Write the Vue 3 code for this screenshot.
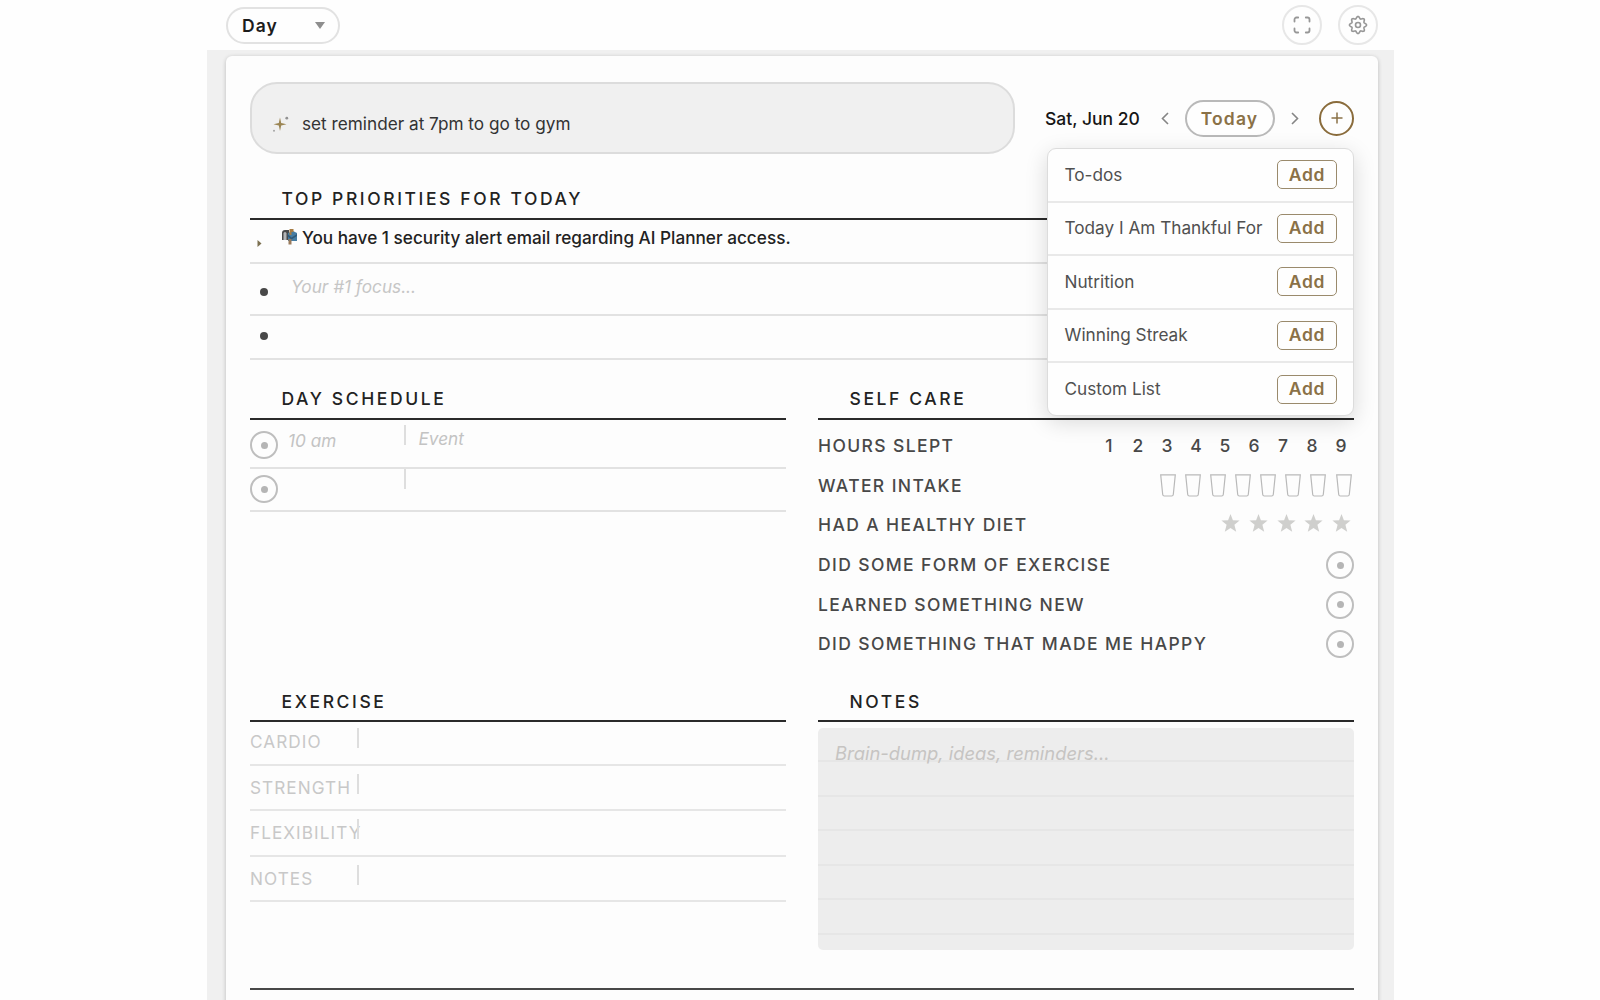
<script setup>
const priorities = [
  { alert: true, text: 'You have 1 security alert email regarding AI Planner access.', height: 44 },
  { placeholder: 'Your #1 focus...', height: 52 },
  { height: 44 },
]
const schedule = [
  { time: '10 am', event: 'Event', height: 49 },
  { time: '', event: '', height: 43 },
]
const exercise = ['CARDIO', 'STRENGTH', 'FLEXIBILITY', 'NOTES']
const habits = ['DID SOME FORM OF EXERCISE', 'LEARNED SOMETHING NEW', 'DID SOMETHING THAT MADE ME HAPPY']
const addable = ['To-dos', 'Today I Am Thankful For', 'Nutrition', 'Winning Streak', 'Custom List']

// Eight rounded teeth around the centre of a 20x20 box.
const gearPoints = Array.from({ length: 96 }, (_, i) => {
  const angle = (i / 96) * Math.PI * 2
  const radius = 7.5 + 1.05 * Math.cos(8 * angle)
  return `${(10 + radius * Math.cos(angle)).toFixed(2)},${(10 + radius * Math.sin(angle)).toFixed(2)}`
}).join(' ')
</script>

<template>
  <div class="app">
    <header class="topbar">
      <button class="view-select">
        <span>Day</span>
        <svg width="10" height="7" viewBox="0 0 10 7"><path d="M0 0h10L5 7z" fill="#8e8e8e" /></svg>
      </button>
      <div class="tools">
        <button class="round">
          <svg width="18" height="18" viewBox="0 0 18 18" fill="none" stroke="#979797" stroke-width="1.8" stroke-linecap="round" stroke-linejoin="round">
            <path d="M1.500 5.500V3.500a2 2 0 0 1 2-2h1.700M12.800 1.500h1.700a2 2 0 0 1 2 2v2M16.500 12.500v2a2 2 0 0 1-2 2h-1.700M5.200 16.500H3.500a2 2 0 0 1-2-2v-2" />
          </svg>
        </button>
        <button class="round">
          <svg width="20" height="20" viewBox="0 0 20 20" fill="none" stroke="#979797" stroke-width="1.6" stroke-linejoin="round">
            <polygon :points="gearPoints" />
            <circle cx="10" cy="10" r="2.500" />
          </svg>
        </button>
      </div>
    </header>

    <main class="sheet">
      <div class="head-row">
        <div class="prompt">
          <svg width="18" height="18" viewBox="0 0 18 18">
            <path d="M8 2.500L9.200 8L14.500 9.200L9.200 10.400L8 16L6.800 10.400L1.500 9.200L6.800 8Z" fill="#9b8553" />
            <circle cx="14.800" cy="3.200" r="1.400" fill="#929292" />
            <circle cx="2" cy="15.800" r="1" fill="#a5a5a5" />
          </svg>
          <span>set reminder at 7pm to go to gym</span>
        </div>
        <div class="date-nav">
          <span class="date">Sat, Jun 20</span>
          <svg class="prev" width="8" height="13" viewBox="0 0 8 13"><path d="M7 1L1.500 6.500L7 12" fill="none" stroke="#858585" stroke-width="1.600" /></svg>
          <button class="today">Today</button>
          <svg class="next" width="8" height="13" viewBox="0 0 8 13"><path d="M1 1L6.500 6.500L1 12" fill="none" stroke="#858585" stroke-width="1.600" /></svg>
          <button class="plus">
            <svg width="12" height="12" viewBox="0 0 12 12"><path d="M6 .5v11M.5 6h11" stroke="#8a7147" stroke-width="1.500" /></svg>
          </button>
          <div class="menu">
            <div v-for="name in addable" :key="name" class="menu-item">
              <span>{{ name }}</span>
              <button class="add">Add</button>
            </div>
          </div>
        </div>
      </div>

      <section>
        <h2 class="first">TOP PRIORITIES FOR TODAY</h2>
        <div v-for="(p, i) in priorities" :key="i" class="priority" :style="{ height: p.height + 'px' }">
          <span class="marker">
            <svg v-if="p.alert" class="arrow" width="5" height="7" viewBox="0 0 5 7"><path d="M.5 0L4.500 3.500L.5 7z" fill="#7c7050" /></svg>
            <i v-else class="bullet" />
          </span>
          <span v-if="p.alert" class="alert">
            <svg width="17" height="17" viewBox="0 0 17 17">
              <path d="M1 12V5a3 3 0 0 1 3-3h4v10z" fill="#48494a" />
              <path d="M2.500 12V5.500a1.500 1.500 0 0 1 3 0V12z" fill="#b4b6b7" />
              <path d="M7 13V5l5-2 4 2v8z" fill="#467da3" />
              <path d="M8.500 1h4v3h-2v3h-2z" fill="#a77c43" />
              <path d="M6.500 6l4 3.500L16 6v2L10.500 11.500 6.500 8.500z" fill="#315a79" />
              <path d="M7.500 11h3v5.500h-3z" fill="#997b5c" />
            </svg>
            {{ p.text }}
          </span>
          <span v-else class="hint">{{ p.placeholder }}</span>
        </div>
      </section>

      <div class="columns upper">
        <section>
          <h2>DAY SCHEDULE</h2>
          <div v-for="(s, i) in schedule" :key="i" class="slot" :style="{ height: s.height + 'px' }">
            <i class="radio" />
            <span class="time">{{ s.time }}</span>
            <span class="event">{{ s.event }}</span>
          </div>
        </section>
        <section>
          <h2>SELF CARE</h2>
          <div class="care">
            <div class="care-row">
              <span>HOURS SLEPT</span>
              <div class="hours"><b v-for="n in 9" :key="n">{{ n }}</b></div>
            </div>
            <div class="care-row">
              <span>WATER INTAKE</span>
              <div class="cups">
                <svg v-for="n in 8" :key="n" width="16" height="23" viewBox="0 0 16 23">
                  <path d="M.7.8h14.600L13.300 20.500a1.700 1.700 0 0 1-1.700 1.500H4.400a1.700 1.700 0 0 1-1.700-1.500Z" fill="none" stroke="#b9b9b9" stroke-width="1.200" />
                </svg>
              </div>
            </div>
            <div class="care-row">
              <span>HAD A HEALTHY DIET</span>
              <div class="stars">
                <svg v-for="n in 5" :key="n" width="19" height="18" viewBox="0 0 19 18">
                  <path d="M9.500 0L11.900 6.300L18.600 6.600L13.400 10.800L15.200 17.700L9.500 13.900L3.800 17.700L5.600 10.800L.4 6.600L7.100 6.300Z" fill="#cfcfcd" />
                </svg>
              </div>
            </div>
            <div v-for="h in habits" :key="h" class="care-row">
              <span>{{ h }}</span>
              <i class="radio" />
            </div>
          </div>
        </section>
      </div>

      <div class="columns lower">
        <section>
          <h2>EXERCISE</h2>
          <div v-for="e in exercise" :key="e" class="exercise"><span>{{ e }}</span></div>
        </section>
        <section>
          <h2>NOTES</h2>
          <div class="notes">Brain-dump, ideas, reminders...</div>
        </section>
      </div>
      <div class="end-rule" />
    </main>
  </div>
</template>

<style>
body {
  margin: 0;
  background: #fefefe;
  overflow: hidden;
}
</style>

<style scoped>
* {
  box-sizing: border-box;
}
.app {
  width: 1187px;
  height: 1000px;
  margin-left: 207px;
  overflow: hidden;
  background: #f0f0f0;
  font-family: Inter, "Liberation Sans", sans-serif;
  font-size: 17.2px;
  line-height: 20px;
  color: #222;
}
button {
  padding: 0;
  font: inherit;
  background: #fefefe;
}
svg {
  display: block;
  flex: none;
}
.topbar {
  display: flex;
  justify-content: space-between;
  align-items: center;
  height: 50px;
  padding: 0 16px 0 19px;
  background: #fefefe;
}
.view-select {
  display: flex;
  justify-content: space-between;
  align-items: center;
  width: 114px;
  height: 37px;
  padding: 0 13px 0 14px;
  border: 2px solid #e2e2e2;
  border-radius: 19px;
  color: #1c1c1c;
  font-size: 17.5px;
  font-weight: 600;
  letter-spacing: 1.1px;
}
.view-select span {
  padding-top: 1px;
}
.tools {
  display: flex;
  gap: 16px;
}
.round {
  display: grid;
  place-items: center;
  width: 40px;
  height: 40px;
  border: 2px solid #e7e7e7;
  border-radius: 50%;
}
.sheet {
  width: 1152px;
  height: 960px;
  margin: 6px 0 0 19px;
  padding: 26px 24px 0;
  border-radius: 6px;
  background: #fdfdfd;
  box-shadow: 0 1px 4px rgba(0, 0, 0, 0.22);
}
.head-row {
  display: flex;
  justify-content: space-between;
  height: 72px;
}
.prompt {
  display: flex;
  align-items: center;
  gap: 12px;
  width: 765px;
  padding: 11px 0 0 20px;
  border: 2px solid #dcdcdc;
  border-radius: 27px;
  background: #f0f0f0;
  color: #333;
}
.date-nav {
  position: relative;
  display: flex;
  align-items: center;
  width: 309px;
  height: 72px;
}
.date {
  width: 115.500px;
  padding-top: 1px;
  font-size: 17.5px;
  font-weight: 500;
  color: #161616;
}
.today {
  width: 90px;
  height: 37px;
  margin: 0 16px;
  padding-top: 1px;
  border: 2px solid #b9b9b9;
  border-radius: 19px;
  color: #8a7147;
  font-size: 17.5px;
  font-weight: 600;
  letter-spacing: 1.1px;
}
.plus {
  display: grid;
  place-items: center;
  width: 35px;
  height: 35px;
  margin-left: auto;
  border: 2px solid #8a6c3c;
  border-radius: 50%;
}
.menu {
  position: absolute;
  z-index: 2;
  top: 66px;
  right: 0;
  width: 307.500px;
  border: 1px solid #dcdcdc;
  border-radius: 9px;
  background: #fefefe;
  box-shadow: 0 6px 22px rgba(0, 0, 0, 0.15);
}
.menu-item {
  display: flex;
  align-items: center;
  justify-content: space-between;
  height: 53.500px;
  padding: 0 16px 0 17px;
  border-bottom: 2px solid #e9e9e9;
  color: #505050;
}
.menu-item:last-child {
  height: 52px;
  border-bottom: 0;
}
.add {
  width: 60px;
  height: 29px;
  border: 1.5px solid #9a8a6c;
  border-radius: 5px;
  color: #8a7147;
  font-size: 17.5px;
  font-weight: 600;
  letter-spacing: 0.7px;
}
h2 {
  display: flex;
  align-items: flex-end;
  height: 60px;
  margin: 0;
  padding: 0 0 9px 31.500px;
  border-bottom: 2px solid #2a2a2a;
  font-size: 17.5px;
  font-weight: 500;
  letter-spacing: 2.6px;
  line-height: 20px;
}
h2.first {
  height: 66px;
}
.lower h2 {
  padding-bottom: 8px;
}
.priority {
  display: flex;
  align-items: center;
  border-bottom: 2px solid #e2e2e2;
}
.marker {
  display: grid;
  place-items: center;
  width: 27px;
  padding-top: 5px;
}
.priority:last-child .marker {
  padding: 0 0 3px;
}
.arrow {
  margin: 0 9px 0 0;
}
.bullet {
  width: 8px;
  height: 8px;
  border-radius: 50%;
  background: #484848;
}
.alert {
  display: flex;
  gap: 4px;
  padding: 0 0 6px 4px;
  font-weight: 500;
}
.hint {
  padding: 0 0 5px 14px;
  color: #c6c6c6;
  font-style: italic;
}
.columns {
  display: grid;
  grid-template-columns: 536px 536px;
  gap: 32px;
}
.upper {
  height: 302px;
}
.lower {
  height: 326px;
}
.radio {
  display: grid;
  flex: none;
  place-items: center;
  width: 28px;
  height: 28px;
  border: 2px solid #bebebe;
  border-radius: 50%;
}
.radio::after {
  content: "";
  width: 7px;
  height: 7px;
  border-radius: 50%;
  background: #b5b5b5;
}
.slot {
  display: flex;
  align-items: flex-end;
  border-bottom: 2px solid #e2e2e2;
  color: #c3c3c3;
  font-style: italic;
}
.slot .radio {
  margin-bottom: 8px;
}
.slot:last-child .radio {
  margin-bottom: 7px;
}
.time {
  align-self: flex-start;
  width: 125.500px;
  margin-top: 11px;
  padding-left: 10px;
}
.event {
  align-self: flex-start;
  height: 20px;
  margin-top: 5px;
  padding: 4px 0 0 13px;
  border-left: 2px solid #dedede;
}
.slot:last-child .event {
  margin-top: 0;
}
.care {
  padding-top: 6.500px;
}
.care-row {
  display: flex;
  align-items: center;
  justify-content: space-between;
  height: 39.600px;
  color: #484848;
  font-size: 17.5px;
  font-weight: 500;
  letter-spacing: 1.38px;
}
.hours {
  display: flex;
  margin-right: -1.500px;
  letter-spacing: 0;
}
.hours b {
  width: 29px;
  font-weight: 500;
  text-align: center;
}
.cups {
  display: flex;
  gap: 9.100px;
  margin-right: 2.500px;
}
.stars {
  display: flex;
  gap: 8.700px;
  margin: 0 3px 5px 0;
}
.exercise {
  display: flex;
  height: 45.400px;
  border-bottom: 2px solid #e6e6e6;
  color: #c8c8c8;
  letter-spacing: 1.05px;
}
.exercise span {
  width: 107px;
  padding-top: 12px;
}
.exercise::after {
  content: "";
  width: 2px;
  height: 20px;
  margin-top: 8px;
  background: #dedede;
}
h2 + .exercise {
  height: 44px;
}
h2 + .exercise span {
  padding-top: 10px;
}
h2 + .exercise::after {
  margin-top: 6px;
}
.notes {
  height: 222px;
  margin-top: 6px;
  padding: 15px 17px;
  border-radius: 5px;
  background: repeating-linear-gradient(#ededed 0 32.500px, #e6e6e6 32.500px 34.500px);
  color: #c6c4c2;
  font-size: 18.4px;
  font-style: italic;
}
.end-rule {
  height: 2px;
  background: #484848;
}
</style>
